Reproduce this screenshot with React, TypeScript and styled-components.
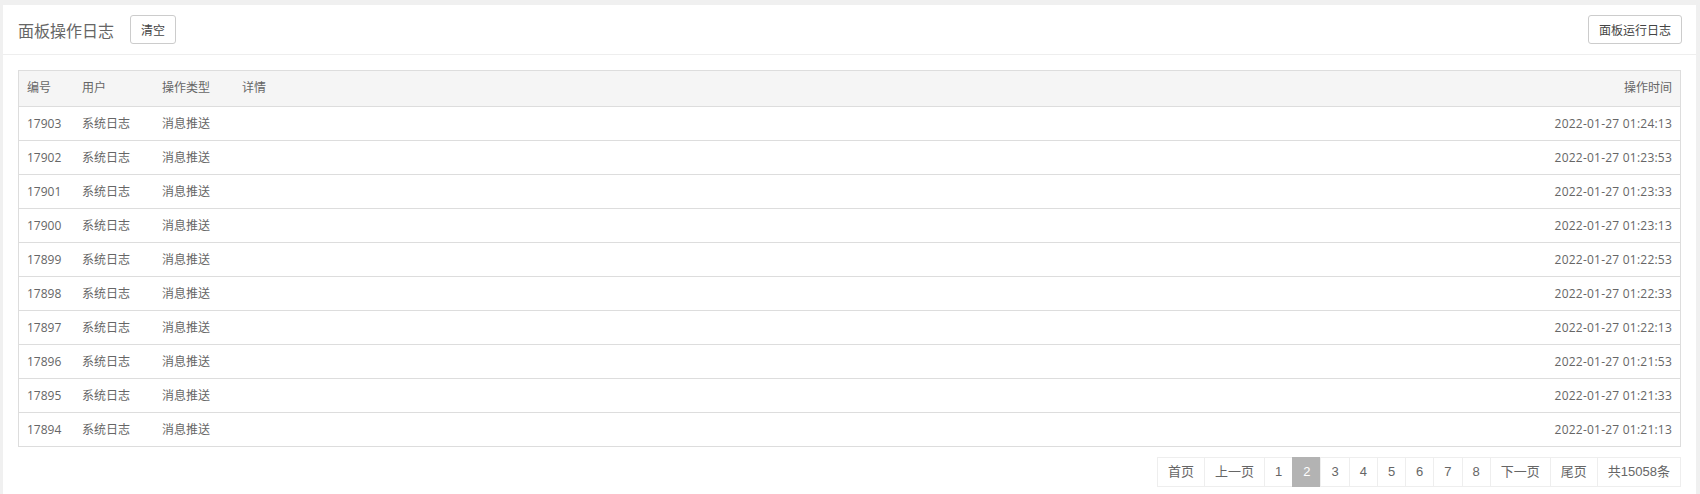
import React from "react";
import styled, { createGlobalStyle } from "styled-components";

const GlobalStyle = createGlobalStyle`
  html, body {
    margin: 0;
    padding: 0;
    background: #f0f0f0;
  }
  body {
    font-family: "Open Sans", "Noto Sans CJK SC", sans-serif;
    color: #666;
    font-size: 12px;
  }
  * { box-sizing: border-box; }
`;

const Page = styled.div`
  padding: 5px 4px 0 3px;
  min-height: 494px;
  display: flex;
`;

const Panel = styled.div`
  flex: 1;
  background: #fff;
  min-height: 489px;
  display: flex;
  flex-direction: column;
`;

const Header = styled.div`
  height: 50px;
  border-bottom: 1px solid #eee;
  display: flex;
  align-items: center;
  padding: 0 14px 0 15px;
  gap: 16px;
`;

const Title = styled.h2`
  margin: 0;
  font-size: 16px;
  font-weight: normal;
  color: #666;
  font-family: "Noto Sans CJK SC", sans-serif;
  line-height: 20px;
`;

const Button = styled.button<{ $right?: boolean }>`
  height: 29px;
  padding: 0 10px;
  border: 1px solid #ccc;
  border-radius: 3px;
  background: #fff;
  color: #444;
  font-size: 12px;
  font-family: "Noto Sans CJK SC", sans-serif;
  line-height: 27px;
  cursor: pointer;
  margin-left: ${(p) => (p.$right ? "auto" : "0")};
`;

const Body = styled.div`
  padding: 15px 15px 0 15px;
  display: flex;
  flex-direction: column;
`;

const Table = styled.div`
  border: 1px solid #ddd;
`;

const Row = styled.div<{ $head?: boolean }>`
  display: grid;
  grid-template-columns: 55px 80px 80px 1fr auto;
  height: ${(p) => (p.$head ? "35px" : "34px")};
  align-items: center;
  background: ${(p) => (p.$head ? "#f5f5f5" : "#fff")};
  border-top: ${(p) => (p.$head ? "none" : "1px solid #ddd")};
  padding-bottom: ${(p) => (p.$head ? "1px" : "0")};
`;

const Cell = styled.div<{ $right?: boolean; $time?: boolean }>`
  padding: 0 8px;
  font-size: 12px;
  line-height: 16px;
  color: #666;
  white-space: nowrap;
  text-align: ${(p) => (p.$right ? "right" : "left")};
  letter-spacing: ${(p) => (p.$time ? "0.22px" : "0")};
  font-family: "Open Sans", "Noto Sans CJK SC", sans-serif;
`;

const Pager = styled.div`
  display: flex;
  justify-content: flex-end;
  margin-top: 10px;
`;

const PageItem = styled.span<{ $active?: boolean }>`
  display: inline-block;
  height: 30px;
  line-height: 28px;
  padding: 0 10px;
  border: 1px solid #eee;
  margin-left: -1px;
  font-size: 13px;
  font-family: "Liberation Sans", "Noto Sans CJK SC", sans-serif;
  color: ${(p) => (p.$active ? "#fff" : "#666")};
  background: ${(p) => (p.$active ? "#b3b3b3" : "#fff")};
  border-color: ${(p) => (p.$active ? "#b3b3b3" : "#eee")};
  cursor: pointer;
`;

const rows = [
  ["17903", "01:24:13"],
  ["17902", "01:23:53"],
  ["17901", "01:23:33"],
  ["17900", "01:23:13"],
  ["17899", "01:22:53"],
  ["17898", "01:22:33"],
  ["17897", "01:22:13"],
  ["17896", "01:21:53"],
  ["17895", "01:21:33"],
  ["17894", "01:21:13"],
];

const pages = ["首页", "上一页", "1", "2", "3", "4", "5", "6", "7", "8", "下一页", "尾页", "共15058条"];

export default function App() {
  return (
    <>
      <GlobalStyle />
      <Page>
        <Panel>
          <Header>
            <Title>面板操作日志</Title>
            <Button>清空</Button>
            <Button $right>面板运行日志</Button>
          </Header>
          <Body>
            <Table>
              <Row $head>
                <Cell>编号</Cell>
                <Cell>用户</Cell>
                <Cell>操作类型</Cell>
                <Cell>详情</Cell>
                <Cell $right>操作时间</Cell>
              </Row>
              {rows.map(([id, t]) => (
                <Row key={id}>
                  <Cell>{id}</Cell>
                  <Cell>系统日志</Cell>
                  <Cell>消息推送</Cell>
                  <Cell></Cell>
                  <Cell $right $time>2022-01-27 {t}</Cell>
                </Row>
              ))}
            </Table>
            <Pager>
              {pages.map((p) => (
                <PageItem key={p} $active={p === "2"}>
                  {p}
                </PageItem>
              ))}
            </Pager>
          </Body>
        </Panel>
      </Page>
    </>
  );
}
